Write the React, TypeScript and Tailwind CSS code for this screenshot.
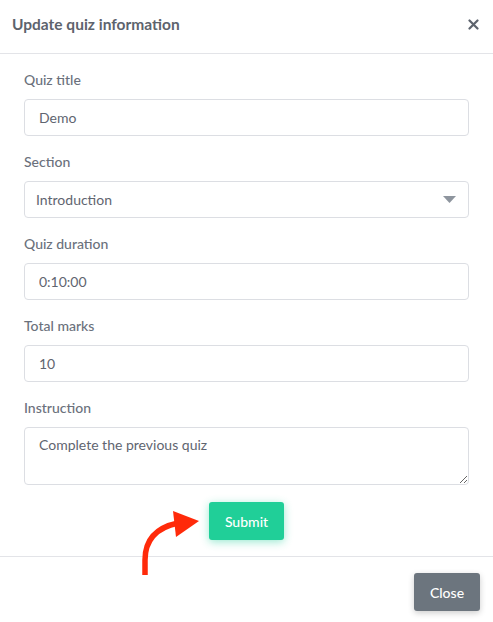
import React from "react";

function Field({ label, children }: { label: string; children: React.ReactNode }) {
  return (
    <div className="mb-4">
      <div className="h-5 leading-5 text-[14px] font-medium text-[#6b717c] mb-[9px]">{label}</div>
      {children}
    </div>
  );
}

const inputCls =
  "w-full h-[37px] border border-[#dcdee3] rounded-[4px] px-[14px] text-[14px] text-[#5f6570] bg-white outline-none";

export default function App() {
  return (
    <div
      className="relative w-[493px] h-[622px] bg-white overflow-hidden"
      style={{ fontFamily: "Lato, 'Noto Sans', sans-serif" }}
    >
      <div className="h-[54px] flex items-start justify-between pt-[14px] pl-3 pr-[14px] border-b border-[#e3e4e8]">
        <div className="text-[15.5px] leading-5 font-bold text-[#5d636d]">Update quiz information</div>
        <div className="text-[#5d636d] pt-[5px]">
          <svg width="11" height="11" viewBox="0 0 11 11">
            <path d="M1.5 1.5 L9.5 9.5 M9.5 1.5 L1.5 9.5" stroke="currentColor" strokeWidth="2.2" strokeLinecap="round" />
          </svg>
        </div>
      </div>
      <div className="px-6 pt-4 pb-4 border-b border-[#e3e4e8]">
        <Field label="Quiz title">
          <input className={inputCls} defaultValue="Demo" />
        </Field>
        <Field label="Section">
          <div className="relative w-full h-[37px] border border-[#dcdee3] rounded-[4px] pl-[11px] pr-3 flex items-center justify-between text-[14px] text-[#5f6570]">
            <span>Introduction</span>
            <svg width="13" height="7" viewBox="0 0 13 7">
              <path d="M0 0 L13 0 L6.5 7 Z" fill="#8e959e" />
            </svg>
          </div>
        </Field>
        <Field label="Quiz duration">
          <input className={inputCls} defaultValue="0:10:00" />
        </Field>
        <Field label="Total marks">
          <input className={inputCls} defaultValue="10" />
        </Field>
        <div>
          <div className="h-5 leading-5 text-[14px] font-medium text-[#6b717c] mb-[9px]">Instruction</div>
          <textarea
            className="block w-full h-[58px] border border-[#dcdee3] rounded-[4px] px-[14px] pt-[6px] text-[14px] text-[#5f6570] outline-none resize-y"
            defaultValue="Complete the previous quiz"
          />
        </div>
        <div className="flex justify-center mt-[17px]">
          <button className="w-[75px] h-[38px] rounded-[3px] bg-[#20cf98] text-white text-[14px] font-medium shadow-[0_2px_8px_rgba(32,207,152,0.45)]">
            Submit
          </button>
        </div>
      </div>
      <div className="flex justify-end pt-4 pr-[13px]">
        <button className="w-[66px] h-[38px] rounded-[3px] bg-[#6c757e] text-white text-[14px] font-medium shadow-[0_2px_6px_rgba(0,0,0,0.2)]">
          Close
        </button>
      </div>
      <svg className="absolute left-0 top-0 pointer-events-none" width="493" height="622" viewBox="0 0 493 622">
        <path d="M145 575 L145 560 Q145 530 178 523" stroke="#ff2a0a" strokeWidth="5.5" fill="none" />
        <path d="M173 511 L199 521 L176 537 Z" fill="#ff2a0a" />
      </svg>
    </div>
  );
}
